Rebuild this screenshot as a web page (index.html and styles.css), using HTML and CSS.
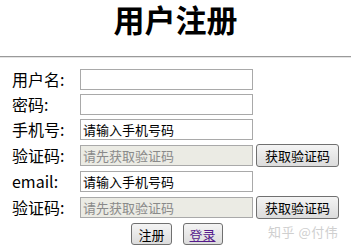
FILE: index.html
```html
<!DOCTYPE html>
<html lang="zh-CN">
<head>
    <meta charset="UTF-8">
    <meta name="viewport" content="width=device-width, initial-scale=1.0">
    <title>用户注册</title>
    <link rel="stylesheet" href="styles.css">
</head>
<body>
    <h1 class="title">用户注册</h1>
    <hr class="divider">

    <form class="reg-form" onsubmit="return false">
        <label class="label" for="username">用户名:</label>
        <input class="field" id="username" type="text">
        <span></span>

        <label class="label" for="password">密码:</label>
        <input class="field" id="password" type="password">
        <span></span>

        <label class="label" for="phone">手机号:</label>
        <input class="field" id="phone" type="text" value="请输入手机号码">
        <span></span>

        <label class="label" for="phone-code">验证码:</label>
        <input class="field" id="phone-code" type="text" value="请先获取验证码" disabled>
        <button class="btn" type="button">获取验证码</button>

        <label class="label" for="email">email:</label>
        <input class="field" id="email" type="text" value="请输入手机号码">
        <span></span>

        <label class="label" for="email-code">验证码:</label>
        <input class="field" id="email-code" type="text" value="请先获取验证码" disabled>
        <button class="btn" type="button">获取验证码</button>

        <div class="actions">
            <button class="btn btn-small" type="submit">注册</button>
            <button class="btn btn-small" type="button"><a href="#">登录</a></button>
        </div>
    </form>

    <div class="watermark">知乎 @付伟</div>
</body>
</html>
```

FILE: styles.css
```css
body {
    margin: 0;
    font-family: "Noto Sans CJK SC", "Noto Sans", sans-serif;
    color: #000;
    background: #fff;
    position: relative;
    height: 250px;
}
.title {
    margin: 0;
    font-size: 31px;
    line-height: 1.2;
    font-weight: bold;
    text-align: center;
}
.divider {
    margin: 19px 0 0;
    border: none;
    border-top: 1px solid #9a9a9a;
    border-bottom: 1px solid #e4e4e4;
}
.reg-form {
    display: grid;
    grid-template-columns: 65px 173px auto;
    column-gap: 3px;
    row-gap: 4px;
    align-items: center;
    justify-content: start;
    margin-top: 11px;
    padding-left: 12px;
}
.label {
    font-size: 16px;
    line-height: 21px;
    white-space: nowrap;
}
.field {
    box-sizing: border-box;
    width: 173px;
    height: 21px;
    margin: 0;
    padding: 0 2px;
    border: 1px solid #a9a9a9;
    font-family: inherit;
    font-size: 13px;
    color: #000;
    background: #fff;
}
.field:disabled {
    background: #ebebe4;
    color: #8a8a8a;
}
.btn {
    box-sizing: border-box;
    height: 23px;
    margin: 0;
    padding: 0 8px;
    border: 1px solid #707070;
    border-radius: 3px;
    background: linear-gradient(#f4f4f4, #dcdcdc);
    font-family: inherit;
    font-size: 13px;
    color: #000;
    white-space: nowrap;
}
.actions {
    grid-column: 1 / 4;
    display: flex;
    justify-content: center;
    gap: 11px;
    padding-left: 3px;
}
.btn-small {
    min-width: 38px;
    height: 22px;
    padding: 0 6px;
}
.btn-small a {
    color: #551a8b;
}
.watermark {
    position: absolute;
    left: 268px;
    top: 222px;
    font-size: 13px;
    color: #cfcfcf;
    letter-spacing: 0.5px;
}
```
